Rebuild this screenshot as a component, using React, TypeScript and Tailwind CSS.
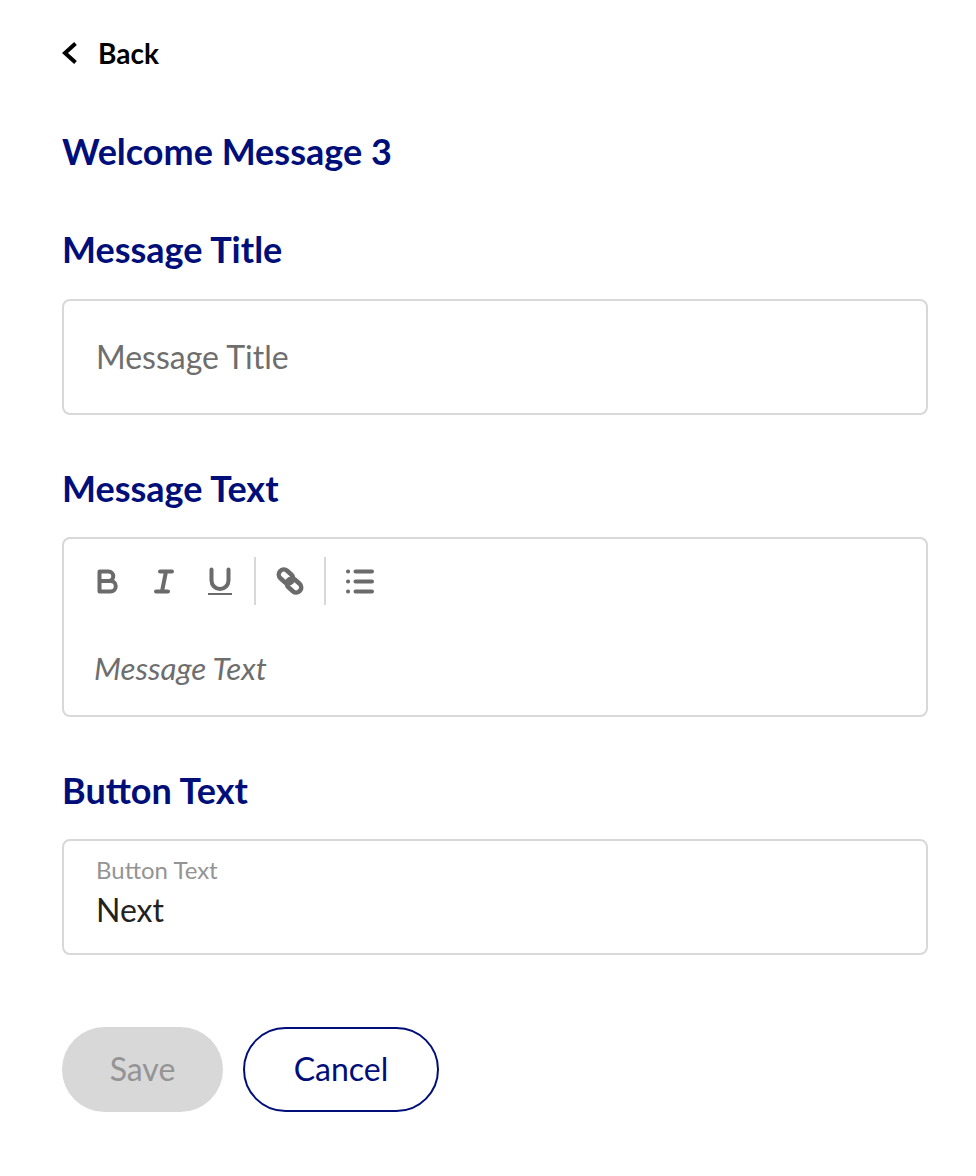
const navy = "text-[#000e7a]";

const SectionLabel = ({ children }: { children: string }) => (
  <h2 className={`${navy} text-[36px] leading-[44px] font-bold`}>{children}</h2>
);

const App = () => {
  return (
    <div className="min-h-[1176px] bg-white pl-[62px] pr-[48px] pt-[31px] font-['Lato',sans-serif]">
      {/* Back link */}
      <button className="flex h-[44px] items-center text-black">
        <svg width="15" height="22" viewBox="0 0 15 22" fill="none" stroke="currentColor" strokeWidth="4">
          <path d="M13.500 1.500L3 11l10.500 9.500" />
        </svg>
        <span className="ml-[21px] text-[28px] leading-[44px] font-bold">Back</span>
      </button>

      <h1 className={`${navy} mt-[54px] text-[36px] leading-[44px] font-bold`}>Welcome Message 3</h1>

      <div className="mt-[54px]">
        <SectionLabel>Message Title</SectionLabel>
        <div className="mt-[28px] flex h-[116px] items-center rounded-[8px] border-2 border-[#d8d8d8] px-[32px]">
          <span className="text-[32px] text-[#6e6e6e]">Message Title</span>
        </div>
      </div>

      <div className="mt-[51px]">
        <SectionLabel>Message Text</SectionLabel>
        <div className="mt-[27px] h-[180px] rounded-[8px] border-2 border-[#d8d8d8]">
          <div className="flex h-[84px] items-center pl-[33px] text-[#6b6b6b]">
            {/* Bold */}
            <svg width="21" height="25" viewBox="0 0 21 25" fill="none" stroke="currentColor" strokeWidth="4" strokeLinejoin="round" strokeLinecap="round">
              <path d="M2.500 2.500h9a4.500 4.500 0 0 1 0 9.500h-9zM2.500 12h11a4.800 4.800 0 0 1 0 10.500H2.500z" />
            </svg>
            {/* Italic */}
            <svg className="ml-[36px]" width="20" height="25" viewBox="0 0 20 25" fill="none" stroke="currentColor" strokeWidth="4" strokeLinecap="round">
              <path d="M6 2.500h12M2 22.500h12M12 2.500L8 22.500" />
            </svg>
            {/* Underline */}
            <svg className="ml-[34px]" width="24" height="28" viewBox="0 0 24 28" fill="none" stroke="currentColor" strokeLinecap="round">
              <path d="M3.500 2.500v11a8.500 8.500 0 0 0 17 0v-11" strokeWidth="4" />
              <path d="M0 27h24" strokeWidth="2" strokeLinecap="butt" />
            </svg>
            <div className="ml-[22px] h-[48px] w-[2px] bg-[#d8d8d8]" />
            {/* Link */}
            <svg className="ml-[20px]" width="28" height="28" viewBox="0 0 28 28" fill="none" stroke="currentColor" strokeWidth="4.500">
              <rect x="2" y="4.500" width="16" height="10" rx="5" transform="rotate(42 10 9.500)" />
              <rect x="10" y="13.500" width="16" height="10" rx="5" transform="rotate(42 18 18.500)" />
            </svg>
            <div className="ml-[20px] h-[48px] w-[2px] bg-[#d8d8d8]" />
            {/* List */}
            <svg className="ml-[20px]" width="28" height="25" viewBox="0 0 28 25" fill="none" stroke="currentColor" strokeWidth="4" strokeLinecap="round">
              <path d="M9.500 2.500H26M9.500 12.500H26M9.500 22.500H26" />
              <path d="M2 2.500h.1M2 12.500h.1M2 22.500h.1" />
            </svg>
          </div>
          <p className="mt-[23px] pl-[30px] text-[31.250px] leading-[44px] italic text-[#6e6e6e]">Message Text</p>
        </div>
      </div>

      <div className="mt-[51px]">
        <SectionLabel>Button Text</SectionLabel>
        <div className="mt-[27px] flex h-[116px] flex-col rounded-[8px] border-2 border-[#d8d8d8] px-[32px] pt-[14px]">
          <span className="text-[24px] leading-[30px] text-[#949494]">Button Text</span>
          <span className="mt-[3px] text-[32px] leading-[44px] text-[#222222]">Next</span>
        </div>
      </div>

      {/* Actions */}
      <div className="mt-[72px] flex gap-[20px]">
        <button className="h-[85px] w-[161px] rounded-full bg-[#d8d8d8] pb-[2px] text-[32px] text-[#949494]">Save</button>
        <button className={`h-[85px] w-[196px] rounded-full border-2 border-[#000e7a] bg-white pb-[2px] text-[32px] ${navy}`}>Cancel</button>
      </div>
    </div>
  );
};

export default App;
